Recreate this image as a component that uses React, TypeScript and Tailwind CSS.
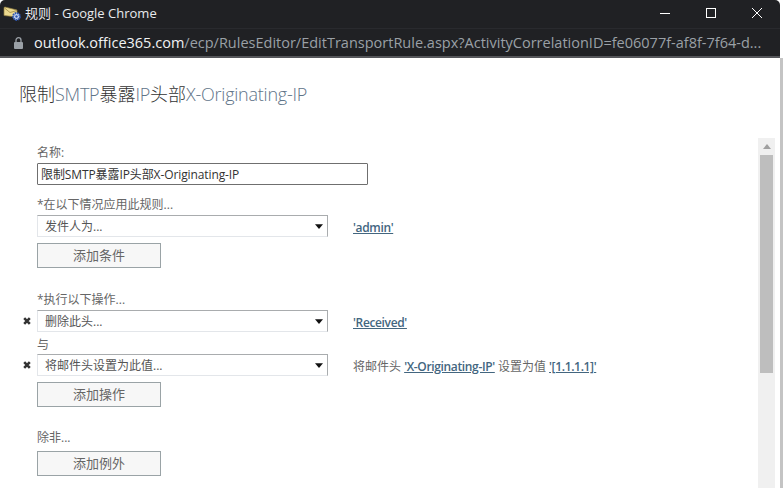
const cjk = "font-['Open_Sans','Noto_Sans_CJK_SC',sans-serif]"

function MailIcon() {
  return (
    <svg width="20" height="20" viewBox="0 0 20 20" className="shrink-0">
      <path d="M1 3.5 L2 3 L14 6 L14 13 L1 11.5 Z" fill="#ecd98f" stroke="#8f7d3e" strokeWidth="0.7" />
      <path d="M1.5 4 L7 8.5 L14 6.5" fill="none" stroke="#a8924c" strokeWidth="0.9" />
      <circle cx="13.5" cy="12.5" r="3.4" fill="#c9d8f5" stroke="#2f55ad" strokeWidth="2" strokeDasharray="1.6 0.7" />
      <circle cx="13.5" cy="12.5" r="1.2" fill="#2f55ad" />
    </svg>
  )
}

function LockIcon() {
  return (
    <svg width="9" height="12" viewBox="0 0 9 12" className="shrink-0">
      <path d="M2 5V3.2a2.5 2.5 0 0 1 5 0V5" fill="none" stroke="#9aa0a6" strokeWidth="1.3" />
      <rect x="0" y="5" width="9" height="7" rx="1" fill="#9aa0a6" />
    </svg>
  )
}

function Select({ label }: { label: string }) {
  return (
    <div className="flex items-center justify-between w-[291px] h-[22px] bg-white border border-[#e3e6ea] border-t-[#a9acae] border-r-[#a9acae] pl-[7px] pr-[4px] text-[12px] text-[#555]">
      <span className="pt-[2px]">{label}</span>
      <svg width="8" height="5" viewBox="0 0 8 5">
        <path d="M0 0.3H8L4 5Z" fill="#111" />
      </svg>
    </div>
  )
}

function AddButton({ label }: { label: string }) {
  return (
    <div className="flex items-center justify-center w-[124px] h-[25px] bg-[#f7f7f7] border border-[#9aa3a6] text-[13px] text-[#666]">
      {label}
    </div>
  )
}

function RemoveX() {
  return (
    <svg width="8" height="8" viewBox="0 0 8 8" className="absolute left-[-14px] top-[7px]">
      <path d="M1.2 1.2L6.8 6.8M6.8 1.2L1.2 6.8" stroke="#333" strokeWidth="2.6" />
    </svg>
  )
}

function Link({ children }: { children: string }) {
  return <span className="underline font-semibold tracking-[-0.35px] text-[#43667f]">{children}</span>
}

export default function App() {
  return (
    <div className={`${cjk} w-[783px] h-[488px] overflow-hidden bg-white flex flex-col`}>
      {/* Chrome title + url */}
      <div className="bg-[#202124] shrink-0 h-[58px] border-b-2 border-[#55565a] rounded-t-[5px] mr-[3px] flex flex-col">
        <div className="h-[29px] flex items-center pl-[3px] border-b border-[#292a2e]">
          <MailIcon />
          <span className="ml-[2px] text-[13px] text-[#e8eaed]">规则 - Google Chrome</span>
          <div className="ml-auto flex items-center mb-[2px]">
            <svg width="10" height="10" viewBox="0 0 10 10" className="mr-[36px]"><path d="M0 5.5H10" stroke="#fff" /></svg>
            <svg width="10" height="10" viewBox="0 0 10 10" className="mr-[36px]"><rect x="0.5" y="0.5" width="9" height="9" fill="none" stroke="#fff" /></svg>
            <svg width="10" height="10" viewBox="0 0 10 10" className="mr-[18px]"><path d="M0 0L10 10M10 0L0 10" stroke="#fff" /></svg>
          </div>
        </div>
        <div className="flex-1 flex items-center pl-[14px] whitespace-nowrap text-[14.5px]">
          <LockIcon />
          <span className="ml-[11px] text-[#f1f3f4]">outlook.office365.com</span>
          <span className="text-[#9aa0a6]">/ecp/RulesEditor/EditTransportRule.aspx?ActivityCorrelationID=fe06077f-af8f-7f64-d...</span>
        </div>
      </div>

      <div className="flex-1 flex min-h-0 border-r-[3px] border-[#c4c4c4]">
        <div className="flex-1 min-w-0 pl-[20px]">
          <h1 className="-ml-[1px] mt-[25px] h-[22px] leading-[22px] text-[18px] font-light tracking-[-0.23px] text-[#5f7488] whitespace-nowrap">
            <span className="text-[#333] tracking-normal">限制</span>SMTP<span className="text-[#333] tracking-normal">暴露</span>IP<span className="text-[#333] tracking-normal">头部</span>X-Originating-IP
          </h1>

          <div className="ml-[17px] mt-[38px] text-[12px] text-[#666]">
            <div className="h-[18px] leading-[20px]">名称:</div>
            <div className="mt-[2px] w-[331px] h-[22px] px-[3px] leading-[21px] border border-[#6f6f6f] rounded-[1px] text-[#333] text-[12px] tracking-[-0.1px]">
              限制SMTP暴露IP头部X-Originating-IP
            </div>

            <div className="mt-[10px] h-[18px] leading-[20px]">*在以下情况应用此规则...</div>
            <div className="mt-[2px] flex items-center">
              <Select label="发件人为..." />
              <div className="ml-[25px] pt-[3px]"><Link>'admin'</Link></div>
            </div>
            <div className="mt-[6px]"><AddButton label="添加条件" /></div>

            <div className="mt-[22px] h-[18px] leading-[20px]">*执行以下操作...</div>
            <div className="mt-[2px] relative flex items-center">
              <RemoveX />
              <Select label="删除此头..." />
              <div className="ml-[25px] pt-[3px]"><Link>'Received'</Link></div>
            </div>
            <div className="mt-[2px] h-[20px] leading-[22px]">与</div>
            <div className="relative flex items-center">
              <RemoveX />
              <Select label="将邮件头设置为此值..." />
              <div className="ml-[25px] pt-[3px] whitespace-pre">将邮件头 <Link>'X-Originating-IP'</Link> 设置为值 <Link>'[1.1.1.1]'</Link></div>
            </div>
            <div className="mt-[6px]"><AddButton label="添加操作" /></div>

            <div className="mt-[21px] h-[18px] leading-[20px]">除非...</div>
            <div className="mt-[5px]"><AddButton label="添加例外" /></div>
          </div>
        </div>

        {/* scrollbar */}
        <div className="shrink-0 w-[17px] mt-[80px] mr-[5px] bg-[#f0f0f0] flex flex-col items-center">
          <div className="h-[17px] flex items-center justify-center">
            <svg width="8" height="5" viewBox="0 0 8 5"><path d="M4 0L8 5H0Z" fill="#a0a0a0" /></svg>
          </div>
          <div className="w-[13px] h-[218px] bg-[#bebebe]" />
        </div>
      </div>
    </div>
  )
}
